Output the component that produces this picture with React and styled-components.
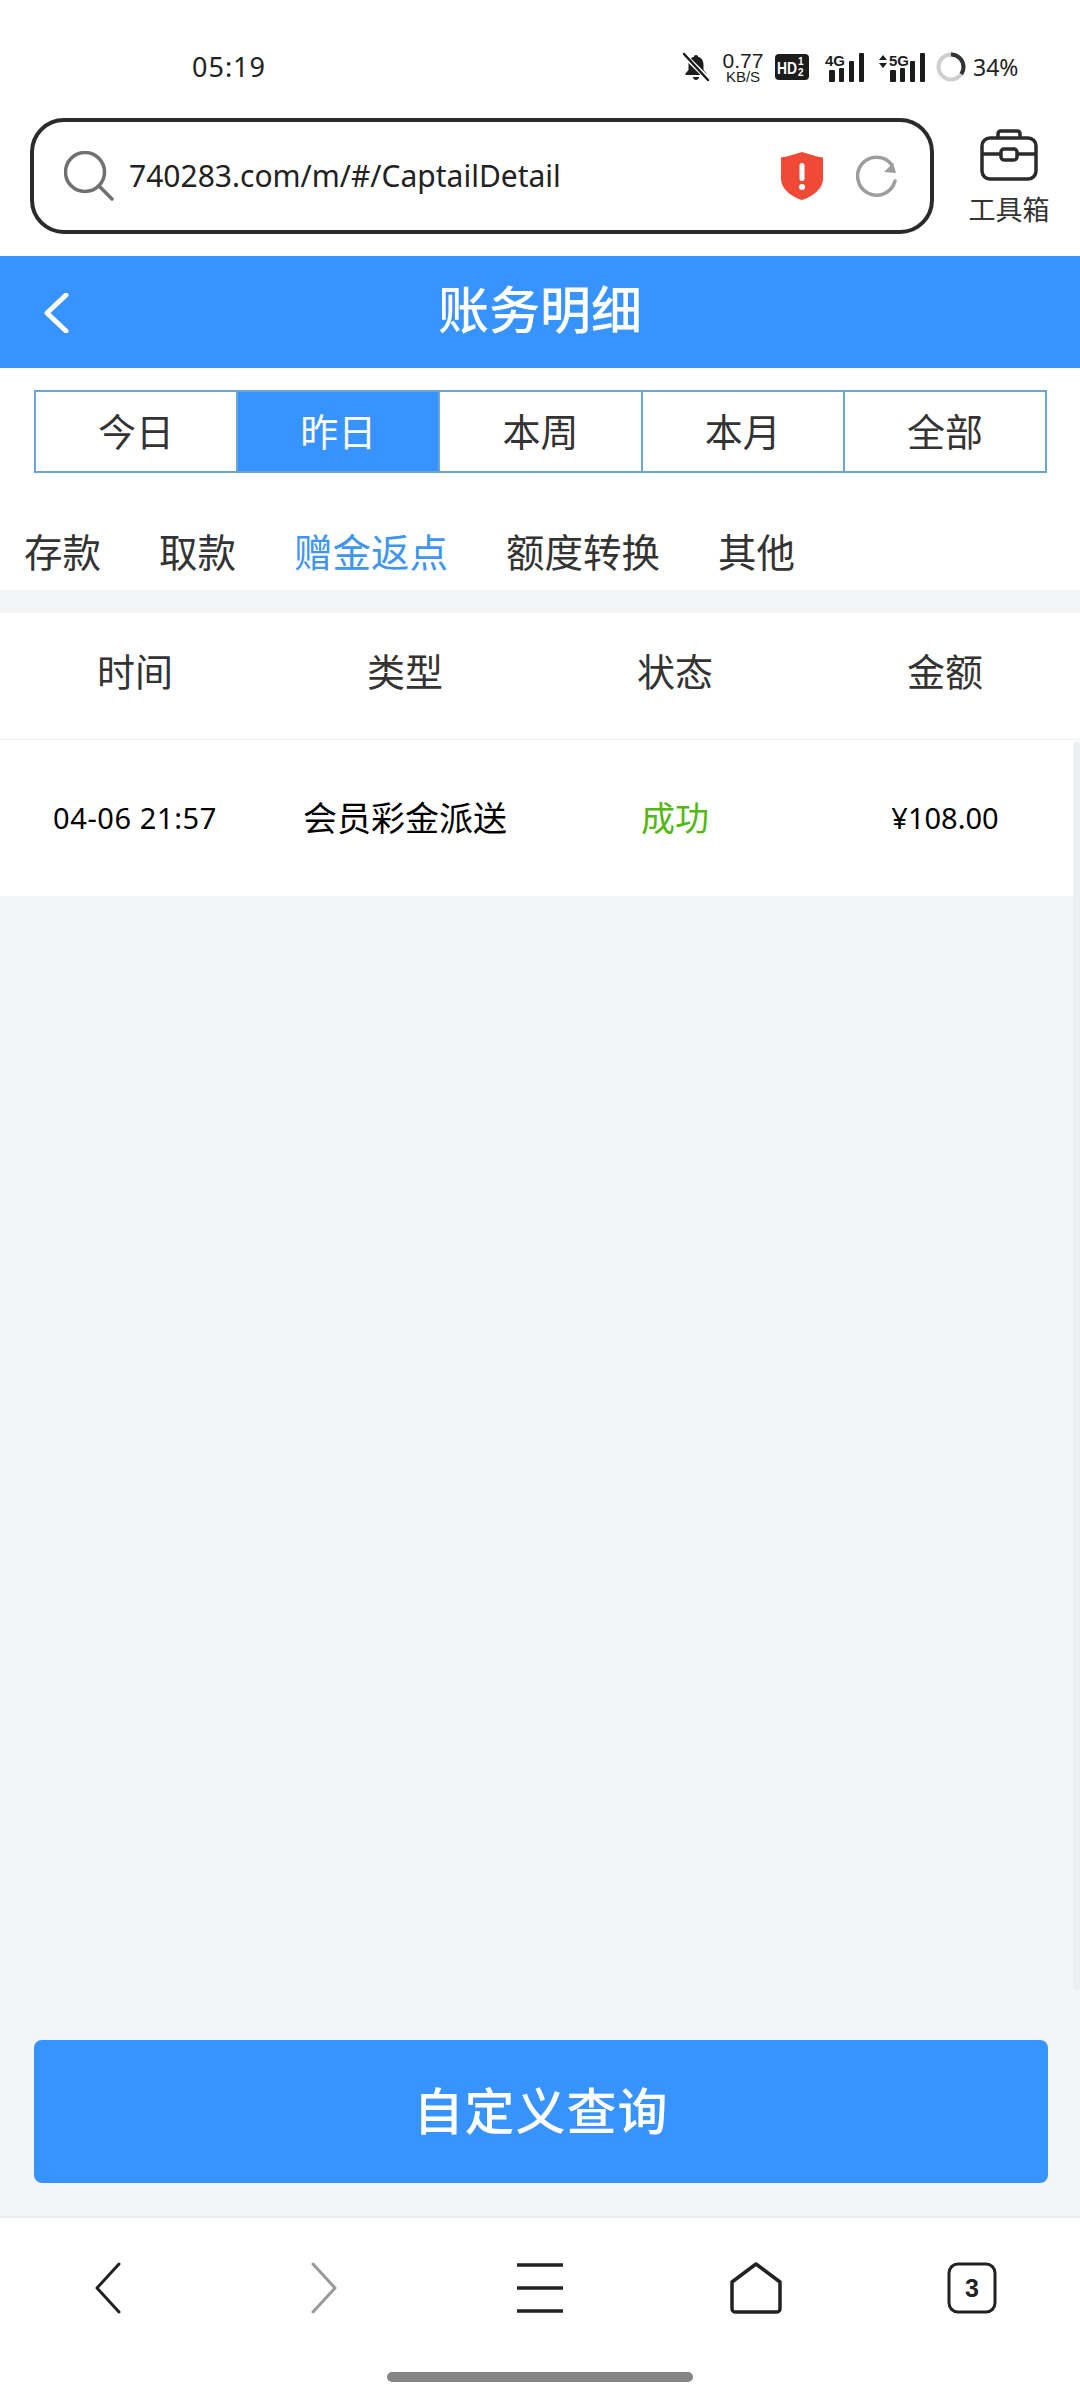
import React from "react";
import styled, { createGlobalStyle } from "styled-components";

const FONT = `"Noto Sans", "Noto Sans CJK SC", sans-serif`;
const BLUE = "#3793ff";

const Global = createGlobalStyle`
  html, body { margin: 0; padding: 0; background: #fff; }
  * { box-sizing: border-box; }
  #root { width: 1080px; height: 2400px; }
`;

const Page = styled.div`
  position: relative;
  width: 1080px;
  height: 2400px;
  display: flex;
  flex-direction: column;
  font-family: ${FONT};
  color: #333;
  overflow: hidden;
  background: #fff;
`;

const StatusBar = styled.div`
  height: 118px;
  padding: 0 62px 0 192px;
  display: flex;
  justify-content: space-between;
  align-items: flex-start;
`;
const Clock = styled.div`
  margin-top: 49px;
  font-size: 27px;
  line-height: 36px;
  letter-spacing: 1px;
  color: #222;
`;
const StatusIcons = styled.div`
  margin-top: 50px;
  height: 34px;
  display: flex;
  align-items: center;
`;
const Speed = styled.div`
  width: 40px;
  margin: 0 12px 0 13px;
  display: flex;
  flex-direction: column;
  align-items: center;
  font-family: "Liberation Sans", sans-serif;
  color: #1c1c1c;
  div:first-child { font-size: 21px; line-height: 19px; font-weight: 500; }
  div:last-child { font-size: 15px; line-height: 13px; }
`;
const Spacer = styled.div`
  width: ${(p) => p.$w}px;
`;
const Battery = styled.div`
  margin-left: 7px;
  width: 45px;
  font-size: 23px;
  line-height: 34px;
  color: #222;
  white-space: nowrap;
`;

const AddressRow = styled.div`
  height: 138px;
  padding-left: 30px;
  display: flex;
  align-items: flex-start;
`;
const AddressBar = styled.div`
  width: 904px;
  height: 116px;
  border: 4px solid #2b2b2b;
  border-radius: 34px;
  padding: 0 32px 0 30px;
  display: flex;
  align-items: center;
`;
const Url = styled.div`
  flex: 1;
  margin-left: 15px;
  font-size: 30px;
  line-height: 40px;
  color: #222;
  white-space: nowrap;
`;
const Tool = styled.div`
  margin-left: 33px;
  width: 84px;
  padding-top: 11px;
  display: flex;
  flex-direction: column;
  align-items: center;
  gap: 12px;
`;
const ToolLabel = styled.div`
  font-size: 27px;
  line-height: 34px;
  color: #333;
  white-space: nowrap;
`;

const Header = styled.div`
  height: 112px;
  background: ${BLUE};
  display: flex;
  align-items: center;
  justify-content: center;
  position: relative;
`;
const BackButton = styled.div`
  position: absolute;
  left: 42px;
  top: 37px;
  line-height: 0;
`;
const Title = styled.div`
  color: #fff;
  font-size: 51px;
  font-weight: 500;
  line-height: 64px;
  margin-top: -6px;
`;

const Range = styled.div`
  margin: 22px 33px 0 34px;
  height: 83px;
  display: flex;
  border: 2px solid #6aa5d8;
`;
const RangeItem = styled.div`
  flex: 1;
  display: flex;
  align-items: center;
  justify-content: center;
  padding-bottom: 5px;
  font-size: 38px;
  color: ${(p) => (p.$active ? "#fff" : "#333")};
  background: ${(p) => (p.$active ? BLUE : "#fff")};
  & + & { border-left: 2px solid #6aa5d8; }
`;

const SubTabs = styled.div`
  height: 117px;
  padding: 51px 0 0 24px;
  display: flex;
  gap: 58px;
`;
const SubTab = styled.div`
  font-size: 38.5px;
  line-height: 56px;
  white-space: nowrap;
  color: ${(p) => (p.$active ? "#3f96ee" : "#333")};
`;

const Main = styled.div`
  flex: 1;
  background: #f4f5f7;
  padding-top: 23px;
  display: flex;
  flex-direction: column;
  border-bottom: 2px solid #ececec;
`;
const TableRow = styled.div`
  display: grid;
  grid-template-columns: repeat(4, 270px);
  background: #fff;
  height: ${(p) => p.$h}px;
  align-items: center;
  justify-items: center;
  ${(p) => (p.$line ? "border-bottom: 1px solid #eeeeee;" : "")}
`;
const HeadCell = styled.div`
  font-size: 38px;
  line-height: 50px;
  margin-top: -10px;
  color: #333;
`;
const Cell = styled.div`
  font-size: ${(p) => p.$size || 29}px;
  letter-spacing: ${(p) => p.$track || 0}px;
  line-height: 44px;
  color: ${(p) => p.$color || "#000"};
  white-space: nowrap;
`;
const Scroll = styled.div`
  position: absolute;
  right: 0;
  top: 742px;
  width: 7px;
  height: 1248px;
  background: #eceef0;
  border-radius: 3px 0 0 3px;
`;
const QueryButton = styled.div`
  margin: auto 32px 33px 34px;
  height: 143px;
  padding-bottom: 6px;
  border-radius: 8px;
  background: ${BLUE};
  color: #fff;
  font-size: 50px;
  font-weight: 500;
  letter-spacing: 1px;
  display: flex;
  align-items: center;
  justify-content: center;
`;

const Nav = styled.div`
  height: 96px;
  display: grid;
  grid-template-columns: repeat(5, 216px);
  align-items: end;
  justify-items: center;
`;
const HomeArea = styled.div`
  height: 86px;
  padding-top: 58px;
  display: flex;
  justify-content: center;
`;
const HomeBar = styled.div`
  width: 306px;
  height: 10px;
  border-radius: 5px;
  background: #858585;
`;

const BellOff = () => (
  <svg width="28" height="30" viewBox="0 0 28 30">
    <path d="M14 3c-1.2 0-2 .8-2 1.8C8 6 6.5 9 6.5 13v5L3.500 21.500v1.500h21v-1.500L21.500 18v-5c0-4-1.500-7-5.500-8.200C16 3.800 15.200 3 14 3z" fill="#1c1c1c" />
    <path d="M11 25h6c0 1.600-1.300 3-3 3s-3-1.400-3-3z" fill="#1c1c1c" />
    <path d="M1 2l26 26" stroke="#fff" strokeWidth="5" />
    <path d="M2 2l24 26" stroke="#1c1c1c" strokeWidth="2.500" strokeLinecap="round" />
  </svg>
);

const HdBadge = () => (
  <svg width="34" height="26" viewBox="0 0 34 26">
    <rect width="34" height="26" rx="4" fill="#1c1c1c" />
    <text x="2" y="20" fontFamily="Liberation Sans, sans-serif" fontWeight="700" fontSize="17" textLength="20" lengthAdjust="spacingAndGlyphs" fill="#fff">HD</text>
    <text x="23" y="11" fontFamily="Liberation Sans, sans-serif" fontWeight="700" fontSize="10" fill="#fff">1</text>
    <text x="23" y="22" fontFamily="Liberation Sans, sans-serif" fontWeight="700" fontSize="10" fill="#fff">2</text>
  </svg>
);

const Signal = ({ label, arrows }) => {
  const w = arrows ? 50 : 40;
  const x0 = w - 36;
  return (
    <svg width={w} height="30" viewBox={`0 0 ${w} 30`}>
      {arrows && <path d="M3 8l4-5 4 5zM3 11l4 5 4-5z" fill="#1c1c1c" />}
      <text x={arrows ? 13 : 0} y="14" fontFamily="Liberation Sans, sans-serif" fontWeight="700" fontSize="15" textLength="20" lengthAdjust="spacingAndGlyphs" fill="#1c1c1c">{label}</text>
      <rect x={x0 + 0} y="18" width="6" height="12" rx="1" fill="#1c1c1c" />
      <rect x={x0 + 10} y="16" width="5" height="14" rx="1" fill="#1c1c1c" />
      <rect x={x0 + 20} y="9" width="5" height="21" rx="1" fill="#1c1c1c" />
      <rect x={x0 + 30} y="1" width="5" height="29" rx="1" fill="#1c1c1c" />
    </svg>
  );
};

const BatteryRing = () => (
  <svg width="30" height="30" viewBox="0 0 30 30">
    <circle cx="15" cy="15" r="12.500" fill="none" stroke="#cfcfcf" strokeWidth="4" />
    <circle cx="15" cy="15" r="12.500" fill="none" stroke="#333" strokeWidth="4" strokeDasharray="27 79" transform="rotate(-90 15 15)" />
  </svg>
);

const SearchIcon = () => (
  <svg width="50" height="50" viewBox="0 0 50 50" fill="none" stroke="#707070" strokeLinecap="round">
    <circle cx="21" cy="21" r="19.500" strokeWidth="3.500" />
    <path d="M36 36l12 12" strokeWidth="3.500" />
  </svg>
);

const ShieldSvg = styled.svg`
  margin-right: 33px;
`;
const Shield = () => (
  <ShieldSvg width="42" height="48" viewBox="0 0 42 48">
    <path d="M21 0l15 4.500 6 1v21C42 38 30 45 21 48 12 45 0 38 0 26.500v-21l6-1z" fill="#f04a37" />
    <rect x="18.500" y="11" width="5" height="18" rx="2.500" fill="#fff" />
    <circle cx="21" cy="35" r="3" fill="#fff" />
  </ShieldSvg>
);

const Refresh = () => (
  <svg width="42" height="42" viewBox="0 0 42 42" fill="none" stroke="#9d9d9d" strokeWidth="3.500" strokeLinecap="round" strokeLinejoin="round">
    <path d="M39 26a19 19 0 1 1-3-16" />
    <path d="M28 17l12 1-3-10" fill="#9d9d9d" stroke="none" />
  </svg>
);

const Toolbox = () => (
  <svg width="58" height="52" viewBox="0 0 58 52" fill="none" stroke="#2b2b2b" strokeWidth="3.500" strokeLinejoin="round">
    <rect x="2" y="9" width="54" height="41" rx="8" />
    <path d="M18 9V5c0-2 1-3 3-3h16c2 0 3 1 3 3v4" />
    <path d="M2 25h19M37 25h19" />
    <rect x="21" y="20" width="16" height="11" rx="3" />
  </svg>
);

const BackChevron = () => (
  <svg width="28" height="40" viewBox="0 0 28 40" fill="none" stroke="#fff" strokeWidth="5" strokeLinecap="round" strokeLinejoin="round">
    <path d="M24 2L5 20l19 18" />
  </svg>
);

const NavBack = () => (
  <svg width="30" height="52" viewBox="0 0 30 52" fill="none" stroke="#222" strokeWidth="3" strokeLinecap="round" strokeLinejoin="round">
    <path d="M26 2L4 26l22 24" />
  </svg>
);
const NavForward = () => (
  <svg width="30" height="52" viewBox="0 0 30 52" fill="none" stroke="#999" strokeWidth="3" strokeLinecap="round" strokeLinejoin="round">
    <path d="M4 2l22 24L4 50" />
  </svg>
);
const NavMenu = () => (
  <svg width="48" height="52" viewBox="0 0 48 52" fill="none" stroke="#222" strokeWidth="3.500">
    <path d="M1 3h46M1 26h46M1 49h46" />
  </svg>
);
const NavHome = () => (
  <svg width="52" height="52" viewBox="0 0 52 52" fill="none" stroke="#222" strokeWidth="3.500" strokeLinejoin="round">
    <path d="M26 2L2 20v26c0 3 1 4 4 4h40c3 0 4-1 4-4V20z" />
  </svg>
);
const NavTabs = () => (
  <svg width="50" height="52" viewBox="0 0 50 52" fill="none">
    <rect x="2" y="2" width="46" height="48" rx="9" stroke="#222" strokeWidth="3" />
    <text x="25" y="35" textAnchor="middle" fontFamily="Liberation Sans, sans-serif" fontWeight="700" fontSize="25" fill="#222">3</text>
  </svg>
);

const ranges = ["今日", "昨日", "本周", "本月", "全部"];
const subTabs = ["存款", "取款", "赠金返点", "额度转换", "其他"];

export default function App() {
  return (
    <Page>
      <Global />
      <StatusBar>
        <Clock>05:19</Clock>
        <StatusIcons>
          <BellOff />
          <Speed>
            <div>0.77</div>
            <div>KB/S</div>
          </Speed>
          <HdBadge />
          <Spacer $w={16} />
          <Signal label="4G" />
          <Spacer $w={11} />
          <Signal label="5G" arrows />
          <Spacer $w={10} />
          <BatteryRing />
          <Battery>34%</Battery>
        </StatusIcons>
      </StatusBar>
      <AddressRow>
        <AddressBar>
          <SearchIcon />
          <Url>740283.com/m/#/CaptailDetail</Url>
          <Shield />
          <Refresh />
        </AddressBar>
        <Tool>
          <Toolbox />
          <ToolLabel>工具箱</ToolLabel>
        </Tool>
      </AddressRow>
      <Header>
        <BackButton>
          <BackChevron />
        </BackButton>
        <Title>账务明细</Title>
      </Header>
      <Range>
        {ranges.map((r, i) => (
          <RangeItem key={r} $active={i === 1}>{r}</RangeItem>
        ))}
      </Range>
      <SubTabs>
        {subTabs.map((t, i) => (
          <SubTab key={t} $active={i === 2}>{t}</SubTab>
        ))}
      </SubTabs>
      <Main>
        <TableRow $h={127} $line>
          <HeadCell>时间</HeadCell>
          <HeadCell>类型</HeadCell>
          <HeadCell>状态</HeadCell>
          <HeadCell>金额</HeadCell>
        </TableRow>
        <TableRow $h={156}>
          <Cell $track={0.6}>04-06 21:57</Cell>
          <Cell $size={34}>会员彩金派送</Cell>
          <Cell $size={34} $color="#52b812">成功</Cell>
          <Cell>¥108.00</Cell>
        </TableRow>
        <QueryButton>自定义查询</QueryButton>
      </Main>
      <Scroll />
      <Nav>
        <NavBack />
        <NavForward />
        <NavMenu />
        <NavHome />
        <NavTabs />
      </Nav>
      <HomeArea>
        <HomeBar />
      </HomeArea>
    </Page>
  );
}
